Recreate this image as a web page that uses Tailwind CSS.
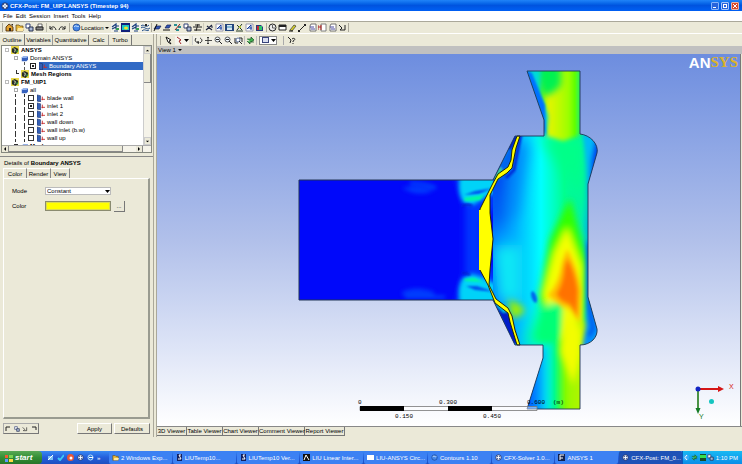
<!DOCTYPE html>
<html lang="en">
<head>
<meta charset="utf-8">
<title>CFX-Post</title>
<script src="https://cdn.jsdelivr.net/npm/@tailwindcss/browser@4"></script>
</head>
<body class="flex h-screen flex-col overflow-hidden bg-[#ebe9d8] font-['Liberation_Sans',sans-serif] text-[6px] leading-[8px] text-black">
<svg class="hidden" aria-hidden="true">
  <symbol id="folder" viewBox="0 0 9 9"><path d="M1 2h3l1 1h3v5H1z" fill="#e8b93c" stroke="#5c4210" stroke-width=".7"/><path d="M2 8l1-3h6L8 8z" fill="#ffe9a0"/></symbol>
  <symbol id="home" viewBox="0 0 9 9"><path d="M1 4l3-3 4 3v4H1z" fill="#e0a030" stroke="#402000" stroke-width=".8"/><path d="M4 5h2v3H4zM6 1h2v2" fill="#30251c"/></symbol>
  <symbol id="copy" viewBox="0 0 9 9"><path d="M1 1h4v4H1z" fill="#fff" stroke="#35457a"/><path d="M4 4h4v4H4z" fill="#a8b8d8" stroke="#26304e"/></symbol>
  <symbol id="print" viewBox="0 0 9 9"><path d="M3 1h4v3H3z" fill="#fff" stroke="#333" stroke-width=".7"/><path d="M1 4h7v3H1z" fill="#888" stroke="#222"/></symbol>
  <symbol id="undo" viewBox="0 0 9 9"><path d="M2 3v3h3M2 6c2-3 5-3 6 1" fill="none" stroke="#222"/></symbol>
  <symbol id="redo" viewBox="0 0 9 9"><path d="M7 3v3H4M7 6C5 3 2 3 1 7" fill="none" stroke="#222"/></symbol>
  <symbol id="globe" viewBox="0 0 9 9"><circle cx="4.5" cy="4.5" r="3.5" fill="#4788e8" stroke="#123a82" stroke-width=".7"/><path d="M2 4c2-3 3 1 5-1" stroke="#d8ecff" fill="none"/></symbol>
  <symbol id="vector" viewBox="0 0 9 9"><path d="M1 4l4-3v2h3M1 6l4-2v2h3M3 8h4" fill="none" stroke="#163c7c" stroke-width="1.2"/><path d="M5 5h3v2H5z" fill="#37a052"/></symbol>
  <symbol id="contour" viewBox="0 0 9 9"><path d="M0 0h9v9H0z" fill="#10207a"/><path d="M1 2h7v5H1z" fill="#1ec7c4"/><ellipse cx="5" cy="5" rx="2" ry="1.5" fill="#f2e52a"/></symbol>
  <symbol id="stream" viewBox="0 0 9 9"><path d="M0 3c3-3 4 3 8-1M0 5c3-3 5 3 9 0M1 8c3-3 4 1 7-1" fill="none" stroke="#204d87"/><path d="M4 1h2v2H4z" fill="#222"/></symbol>
  <symbol id="plane" viewBox="0 0 9 9"><path d="M1 6l2-3h5L6 6z" fill="#3458b8" stroke="#111e52" stroke-width=".7"/><path d="M1 8l3-7" stroke="#111"/></symbol>
  <symbol id="plane2" viewBox="0 0 9 9"><path d="M2 5l2-3h4L6 5z" fill="#3458b8" stroke="#111e52" stroke-width=".7"/><path d="M0 7h7" stroke="#111"/></symbol>
  <symbol id="probe" viewBox="0 0 9 9"><path d="M1 1h3v2H1zM5 3h3v2H5zM3 6h3v2H3z" fill="#278d91"/><path d="M7 1L2 7" stroke="#8e2020"/></symbol>
  <symbol id="frame" viewBox="0 0 9 9"><path d="M0 4h9M1 7h7M5 1L3 8M2 2h5" fill="none" stroke="#222"/></symbol>
  <symbol id="cross" viewBox="0 0 9 9"><path d="M1 7l6-5M2 3l5 4M6 4h2" fill="none" stroke="#1d2440" stroke-width="1.2"/></symbol>
  <symbol id="text" viewBox="0 0 9 9"><path d="M1 1h7v7H1z" fill="#fff" stroke="#99a"/><path d="M2 6l4-4v5M3 5h4" fill="none" stroke="#163e9d"/></symbol>
  <symbol id="legend" viewBox="0 0 9 9"><path d="M0 1h9v7H0z" fill="#24457c"/><path d="M2 2h5v5H2z" fill="#d5e6f2"/><path d="M2 4h5" stroke="#398bb6"/></symbol>
  <symbol id="axes" viewBox="0 0 9 9"><path d="M1 8h7M2 2l5 5M7 1L2 7" fill="none" stroke="#253b25"/><path d="M4 3h2v2H4z" fill="#b6ca37"/></symbol>
  <symbol id="color" viewBox="0 0 9 9"><path d="M1 2h5l2 2v4H1z" fill="#28397b"/><path d="M2 3h2v4H2z" fill="#c32a36"/><path d="M4 3h3v4H4z" fill="#2ac56d"/></symbol>
  <symbol id="clock" viewBox="0 0 9 9"><circle cx="4.5" cy="4.5" r="3.5" fill="#eee" stroke="#222"/><path d="M4.500 2v3H7" fill="none" stroke="#222" stroke-width=".7"/></symbol>
  <symbol id="film" viewBox="0 0 9 9"><path d="M1 2h7v5H1z" fill="#fff" stroke="#222"/><path d="M1 2h7v2H1z" fill="#222"/></symbol>
  <symbol id="pencil" viewBox="0 0 9 9"><path d="M2 7l4-5 2 1-4 5z" fill="#d7d12b" stroke="#333" stroke-width=".7"/><path d="M1 8h4" stroke="#111"/></symbol>
  <symbol id="line" viewBox="0 0 9 9"><path d="M1 8l6-6" stroke="#222"/><path d="M6 1h2v2H6zM0 7h2v2H0z" fill="#222"/></symbol>
  <symbol id="page" viewBox="0 0 9 9"><path d="M3 1h5v7H2V3z" fill="#fff" stroke="#555" stroke-width=".8"/><path d="M2 4h4M3 6h4" stroke="#4b4aa0"/></symbol>
  <symbol id="pageRed" viewBox="0 0 9 9"><path d="M3 1h5v7H3z" fill="#fff" stroke="#666" stroke-width=".8"/><path d="M0 2v5M3 2v5M0 4h3" stroke="#b02525"/></symbol>
  <symbol id="sum" viewBox="0 0 9 9"><path d="M1 2l3 3-2 2h5V2" fill="none" stroke="#222"/></symbol>
  <symbol id="cursor" viewBox="0 0 9 9"><path d="M2 1l5 3-2 1 2 3-3-2z" fill="#fff" stroke="#111"/></symbol>
  <symbol id="cursorRed" viewBox="0 0 9 9"><path d="M2 1l4 3-2 1 2 3" fill="#fff" stroke="#a02323"/></symbol>
  <symbol id="rotate" viewBox="0 0 9 9"><path d="M2 2c-2 3 0 5 3 4M6 7c3-2 2-4 0-5M3 6l2 0-1 2" fill="none" stroke="#222"/></symbol>
  <symbol id="pan" viewBox="0 0 9 9"><path d="M4 1v7M1 4.500h7M3 2l1-1 1 1M3 7l1 1 1-1" fill="none" stroke="#222" stroke-width=".8"/></symbol>
  <symbol id="zoom" viewBox="0 0 9 9"><circle cx="3.500" cy="3.500" r="2.500" fill="#eef6ff" stroke="#333" stroke-width=".8"/><path d="M5 5l3 3M2 3.500h3" stroke="#222"/></symbol>
  <symbol id="zoomBox" viewBox="0 0 9 9"><path d="M1 2v5h3M5 2h3v4" fill="none" stroke="#222"/><circle cx="4" cy="4" r="2" fill="#fff" stroke="#37528b" stroke-width=".8"/><path d="M5 5l3 3" stroke="#222"/></symbol>
  <symbol id="refresh" viewBox="0 0 9 9"><path d="M1 3h4V1l3 3-3 2M8 6H4v2L1 5" fill="#3fb34f" stroke="#164f20" stroke-width=".7"/></symbol>
  <symbol id="help" viewBox="0 0 9 9"><path d="M1 1l3 3-1 3M5 3c3-2 4 1 1 2v1M6 7v1" fill="none" stroke="#222"/></symbol>
  <symbol id="case" viewBox="0 0 9 9"><path d="M0 0h9v9H0z" fill="#e9d94a"/><path d="M1 3l3-2 4 2v3L5 9 1 7z" fill="#292c24"/><path d="M3 3l2 1-1 3" fill="none" stroke="#d7e9d0"/><path d="M6 5h2v2H6z" fill="#3a9b42"/></symbol>
  <symbol id="domain" viewBox="0 0 9 9"><path d="M1 3l2-1h6v4L7 8H1z" fill="#3762be"/><path d="M1 3l2-1h6L7 4H1z" fill="#8fb2f1"/></symbol>
  <symbol id="boundary" viewBox="0 0 9 9"><path d="M0 1l4 1v7L0 8z" fill="#345fb5" stroke="#122b65" stroke-width=".6"/><path d="M9 6H5M6 3v4" stroke="#c52e31"/></symbol>
  <symbol id="gear" viewBox="0 0 9 9"><circle cx="4.500" cy="4.500" r="3.500" fill="#e7eef8" stroke="#17265c"/><path d="M2 2l5 5M7 2L2 7" stroke="#27418b"/><circle cx="4.500" cy="4.500" r="1" fill="#fff"/></symbol>
</svg>

<header>
  <div class="flex h-[11px] items-center bg-linear-to-b from-[#2084f8] via-[#0053df] to-[#0060f4] pl-px pr-[3px] text-white">
    <svg class="size-[8px]"><use href="#gear"/></svg>
    <h1 class="ml-px flex-1 font-bold">CFX-Post: FM_UIP1.ANSYS (Timestep 94)</h1>
    <div class="flex gap-[2px]">
      <button aria-label="Minimize" class="flex size-[8px] items-end rounded-[1px] border border-[#85b2fb] bg-[#2864dc] p-px"><span class="h-px w-[3px] bg-white"></span></button>
      <button aria-label="Restore" class="size-[8px] rounded-[1px] border border-[#a5c5fb] bg-[#2864dc] p-px"><span class="block size-[4px] border border-white"></span></button>
      <button aria-label="Close" class="size-[8px] rounded-[1px] border border-[#e8b4a8] bg-[#d94829]"><svg viewBox="0 0 6 6"><path d="M1 1l4 4M5 1L1 5" stroke="#fff"/></svg></button>
    </div>
  </div>
  <nav class="flex h-[11px] items-center gap-[3px] border-b border-[#aaa89a] bg-white pl-[3px]">
    <button>File</button><button>Edit</button><button>Session</button><button>Insert</button><button>Tools</button><button>Help</button>
  </nav>
  <div class="flex h-[12px] items-center border-b border-white pl-[2px]">
    <div class="flex items-center gap-px border-l border-[#aaa89a] pl-[2px]">
      <button aria-label="Load results"><svg class="size-[9px]"><use href="#home"/></svg></button>
      <button aria-label="Open state"><svg class="size-[9px]"><use href="#folder"/></svg></button>
      <button aria-label="Save state"><svg class="size-[9px]"><use href="#copy"/></svg></button>
      <button aria-label="Print"><svg class="size-[9px]"><use href="#print"/></svg></button>
    </div>
    <div class="ml-[2px] flex gap-px border-l border-[#bbb9aa] pl-px">
      <button aria-label="Undo"><svg class="size-[9px]"><use href="#undo"/></svg></button>
      <button aria-label="Redo"><svg class="size-[9px]"><use href="#redo"/></svg></button>
    </div>
    <button class="ml-[2px] flex items-center border-l border-[#aaa89a] pl-[2px]"><svg class="size-[9px]"><use href="#globe"/></svg><span>Location</span><svg class="ml-px size-[4px]" viewBox="0 0 4 4"><path d="M0 1h4L2 3z"/></svg></button>
    <div class="ml-[2px] flex gap-px bg-[#f3f2e8]">
      <button aria-label="Vector"><svg class="size-[9px]"><use href="#vector"/></svg></button>
      <button aria-label="Contour"><svg class="size-[9px]"><use href="#contour"/></svg></button>
      <button aria-label="Streamline"><svg class="size-[9px]"><use href="#vector"/></svg></button>
      <button aria-label="Particle track"><svg class="size-[9px]"><use href="#stream"/></svg></button>
    </div>
    <div class="ml-px flex gap-px border-l border-[#aaa89a] pl-px">
      <button aria-label="Slice plane"><svg class="size-[9px]"><use href="#plane"/></svg></button>
      <button aria-label="Clip plane"><svg class="size-[9px]"><use href="#plane2"/></svg></button>
      <button aria-label="Probe"><svg class="size-[9px]"><use href="#probe"/></svg></button>
      <button aria-label="Instance transform"><svg class="size-[9px]"><use href="#copy"/></svg></button>
      <button aria-label="Coordinate frame"><svg class="size-[9px]"><use href="#frame"/></svg></button>
    </div>
    <div class="ml-px flex gap-px border-l border-[#cecbbb] pl-px">
      <button aria-label="Text"><svg class="size-[9px]"><use href="#cross"/></svg></button>
      <button aria-label="Annotation"><svg class="size-[9px]"><use href="#text"/></svg></button>
      <button aria-label="Legend"><svg class="size-[9px]"><use href="#legend"/></svg></button>
      <button aria-label="Axes"><svg class="size-[9px]"><use href="#axes"/></svg></button>
      <button aria-label="Text box"><svg class="size-[9px]"><use href="#text"/></svg></button>
      <button aria-label="Color map"><svg class="size-[9px]"><use href="#color"/></svg></button>
    </div>
    <div class="ml-[2px] flex gap-px border-x border-[#aaa89a] px-px">
      <button aria-label="Timestep selector"><svg class="size-[9px]"><use href="#clock"/></svg></button>
      <button aria-label="Animation"><svg class="size-[9px]"><use href="#film"/></svg></button>
      <button aria-label="Quick editor"><svg class="size-[9px]"><use href="#pencil"/></svg></button>
      <button aria-label="Line"><svg class="size-[9px]"><use href="#line"/></svg></button>
      <button aria-label="Table"><svg class="size-[9px]"><use href="#page"/></svg></button>
      <button aria-label="Chart"><svg class="size-[9px]"><use href="#pageRed"/></svg></button>
      <button aria-label="Report"><svg class="size-[9px]"><use href="#page"/></svg></button>
      <button aria-label="Function calculator"><svg class="size-[9px]"><use href="#sum"/></svg></button>
    </div>
  </div>
</header>

<div class="flex min-h-0 flex-1">
  <aside class="flex w-[154px] shrink-0 flex-col border-r border-[#aaa89a]">
    <div role="tablist" class="flex h-[11px] shrink-0 items-end whitespace-nowrap text-center">
      <button role="tab" class="h-[11px] w-[25px] border-r border-[#777]">Outline</button>
      <button role="tab" class="h-[10px] w-[28px] border-r border-[#999]">Variables</button>
      <button role="tab" class="h-[10px] w-[36px] border-r border-[#777]">Quantitative</button>
      <button role="tab" class="h-[10px] w-[20px] border-r border-[#999]">Calc</button>
      <button role="tab" class="h-[10px] w-[23px] border-r border-[#777]">Turbo</button>
    </div>
    <div class="mx-px flex h-[108px] shrink-0 flex-col border border-[#85887f] bg-white">
      <div class="flex min-h-0 flex-1">
        <ul class="min-w-0 flex-1 overflow-hidden whitespace-nowrap *:flex *:h-[8px] *:items-center *:gap-[2px]">
          <li class="pl-[3px] font-bold"><span class="size-[4px] border border-[#bbb]"></span><svg class="size-[8px]"><use href="#case"/></svg>ANSYS</li>
          <li class="pl-[12px]"><span class="size-[4px] border border-[#aaa]"></span><svg class="ml-px size-[7px]"><use href="#domain"/></svg>Domain ANSYS</li>
          <li class="pl-[22px]"><span class="h-full border-l border-dashed border-[#555]"></span><input type="checkbox" checked aria-label="Boundary ANSYS" class="ml-[3px] size-[6px] appearance-none border border-[#222] bg-[radial-gradient(#222_30%,white_35%)]"><span class="ml-px flex h-full flex-1 items-center gap-[2px] bg-[#316ac5] text-white"><svg class="size-[8px]"><use href="#boundary"/></svg>Boundary ANSYS</span></li>
          <li class="pl-[14px] font-bold"><span class="-mt-[4px] h-[4px] w-[3px] border-b border-l border-[#333]"></span><svg class="size-[8px]"><use href="#case"/></svg>Mesh Regions</li>
          <li class="pl-[3px] font-bold"><span class="size-[4px] border border-[#bbb]"></span><svg class="size-[8px]"><use href="#case"/></svg>FM_UIP1</li>
          <li class="pl-[12px]"><span class="size-[4px] border border-[#aaa]"></span><svg class="ml-px size-[7px]"><use href="#domain"/></svg>all</li>
          <li class="pl-[13px]"><span class="h-full border-l border-dashed border-[#333]"></span><span class="ml-[6px] h-full border-l border-dashed border-[#333]"></span><input id="b1" type="checkbox" class="ml-px size-[6px] appearance-none border border-[#333]"><svg class="ml-px size-[8px]"><use href="#boundary"/></svg><label for="b1">blade wall</label></li>
          <li class="pl-[13px]"><span class="h-full border-l border-dashed border-[#333]"></span><span class="ml-[6px] h-full border-l border-dashed border-[#333]"></span><input id="b2" type="checkbox" checked class="ml-px size-[6px] appearance-none border border-[#333] bg-[radial-gradient(#222_30%,white_35%)]"><svg class="ml-px size-[8px]"><use href="#boundary"/></svg><label for="b2">inlet 1</label></li>
          <li class="pl-[13px]"><span class="h-full border-l border-dashed border-[#333]"></span><span class="ml-[6px] h-full border-l border-dashed border-[#333]"></span><input id="b3" type="checkbox" class="ml-px size-[6px] appearance-none border border-[#333]"><svg class="ml-px size-[8px]"><use href="#boundary"/></svg><label for="b3">inlet 2</label></li>
          <li class="pl-[13px]"><span class="h-full border-l border-dashed border-[#333]"></span><span class="ml-[6px] h-full border-l border-dashed border-[#333]"></span><input id="b4" type="checkbox" class="ml-px size-[6px] appearance-none border border-[#333]"><svg class="ml-px size-[8px]"><use href="#boundary"/></svg><label for="b4">wall down</label></li>
          <li class="pl-[13px]"><span class="h-full border-l border-dashed border-[#333]"></span><span class="ml-[6px] h-full border-l border-dashed border-[#333]"></span><input id="b5" type="checkbox" class="ml-px size-[6px] appearance-none border border-[#333]"><svg class="ml-px size-[8px]"><use href="#boundary"/></svg><label for="b5">wall inlet (b.w)</label></li>
          <li class="pl-[13px]"><span class="h-full border-l border-dashed border-[#333]"></span><span class="ml-[6px] h-full border-l border-dashed border-[#333]"></span><input id="b6" type="checkbox" class="ml-px size-[6px] appearance-none border border-[#333]"><svg class="ml-px size-[8px]"><use href="#boundary"/></svg><label for="b6">wall up</label></li>
          <li class="pl-[12px] font-bold"><span class="size-[4px] border border-[#333]"></span><svg class="ml-px size-[7px]"><use href="#domain"/></svg>Mesh</li>
        </ul>
        <div class="flex w-[8px] shrink-0 flex-col border-l border-[#ccc] bg-[#ecebe0]">
          <button aria-label="Scroll up" class="h-[8px] border border-[#ccc] bg-[#ebe9d8]"><svg viewBox="0 0 6 6"><path d="M1 4h4L3 2z"/></svg></button>
          <span class="h-[29px] border-b border-r border-[#888] bg-[#ebe9d8]"></span><span class="flex-1 bg-[#f5f3e9]"></span>
          <button aria-label="Scroll down" class="h-[8px] border border-[#ccc] bg-[#ebe9d8]"><svg viewBox="0 0 6 6"><path d="M1 2h4L3 4z"/></svg></button>
        </div>
      </div>
      <div class="flex h-[7px] shrink-0 border-t border-[#aaa] bg-[#f5f3e9] pr-[8px]">
        <button aria-label="Scroll left" class="w-[7px] border-r border-[#888] bg-[#ebe9d8]"><svg class="size-[6px]" viewBox="0 0 6 6"><path d="M4 1v4L2 3z"/></svg></button>
        <span class="w-[114px] border-b border-r border-[#888] bg-[#ebe9d8]"></span><span class="flex-1"></span>
        <button aria-label="Scroll right" class="w-[7px] border-r border-[#888] bg-[#ebe9d8]"><svg class="size-[6px]" viewBox="0 0 6 6"><path d="M2 1v4l2-2z"/></svg></button>
      </div>
    </div>
    <div class="mt-[3px] flex min-h-0 flex-1 flex-col border-t border-[#888]">
      <h2 class="flex h-[11px] items-center pl-[4px]"><span>Details of <b>Boundary ANSYS</b></span></h2>
      <div role="tablist" class="flex h-[10px] pl-[3px]">
        <button role="tab" class="w-[24px] border-l border-t border-white border-r border-r-[#888]">Color</button>
        <button role="tab" class="w-[24px] border-r border-t border-t-white border-r-[#888]">Render</button>
        <button role="tab" class="w-[19px] border-r border-t border-t-white border-r-[#888]">View</button>
      </div>
      <form class="mx-[3px] min-h-0 flex-1 border-b-2 border-l border-r-2 border-t border-b-[#999b90] border-l-white border-r-[#999b90] border-t-white pl-[8px] pt-[8px]">
        <div class="flex h-[8px] items-center"><label for="mode" class="w-[33px]">Mode</label><div class="relative w-[66px]"><select id="mode" class="block h-[8px] w-full appearance-none border border-[#bbb] bg-white pl-px text-[6px] leading-[6px]"><option>Constant</option></select><svg class="pointer-events-none absolute right-px top-[2px] size-[5px]" viewBox="0 0 5 5"><path d="M0 1h5L2.500 4z"/></svg></div></div>
        <div class="mt-[6px] flex h-[10px] items-center"><label for="color" class="w-[33px]">Color</label><input id="color" readonly class="h-[10px] w-[66px] border border-[#8a8b70] bg-[#ff0] outline outline-1 -outline-offset-2 outline-[#dada50]"><button type="button" aria-label="Choose color" class="ml-[3px] h-[11px] w-[11px] border-b border-r border-[#777]">...</button></div>
      </form>
      <div class="flex h-[18px] shrink-0 items-center px-[3px] pt-px">
        <div class="flex h-[11px] w-[36px] items-center justify-around border-b border-r border-[#777] border-l border-t border-l-[#aaa] border-t-[#aaa]">
          <button type="button" aria-label="New"><svg class="size-[6px]" viewBox="0 0 6 6"><path d="M5 1H1v4" fill="none" stroke="#222"/></svg></button>
          <button type="button" aria-label="Edit"><svg class="size-[6px]"><use href="#copy"/></svg></button>
          <button type="button" aria-label="Duplicate"><svg class="size-[6px]"><use href="#sum"/></svg></button>
          <button type="button" aria-label="Delete"><svg class="size-[6px]" viewBox="0 0 6 6"><path d="M1 1h4v3" fill="none" stroke="#222"/></svg></button>
        </div>
        <button class="ml-auto h-[11px] w-[35px] border-b border-r border-[#777] border-l border-t border-l-white border-t-white">Apply</button>
        <button class="ml-[2px] h-[11px] w-[36px] border-b border-r border-[#777] border-l border-t border-l-white border-t-white">Defaults</button>
      </div>
    </div>
  </aside>

  <main class="ml-[2px] flex min-w-0 flex-1 flex-col border-l border-[#aaa89a]">
    <div class="flex h-[12px] shrink-0 items-center pl-[3px]">
      <div class="flex gap-[2px] border-l border-[#aaa89a] pl-[3px]">
        <button aria-label="Select"><svg class="size-[9px]"><use href="#cursor"/></svg></button>
        <button aria-label="Pick mode" class="flex items-center bg-[#f5f4ec]"><svg class="size-[9px]"><use href="#cursorRed"/></svg><svg class="size-[5px]" viewBox="0 0 5 5"><path d="M0 1h5L2.500 4z"/></svg></button>
      </div>
      <div class="ml-[3px] flex gap-px border-l border-[#ccc] bg-[#f1f0e6] pl-px">
        <button aria-label="Rotate"><svg class="size-[9px]"><use href="#rotate"/></svg></button>
        <button aria-label="Pan"><svg class="size-[9px]"><use href="#pan"/></svg></button>
        <button aria-label="Zoom"><svg class="size-[9px]"><use href="#zoom"/></svg></button>
        <button aria-label="Zoom box"><svg class="size-[9px]"><use href="#zoom"/></svg></button>
        <button aria-label="Fit view"><svg class="size-[9px]"><use href="#zoomBox"/></svg></button>
      </div>
      <button aria-label="Highlighting" class="ml-px border-x border-[#bbb] px-px"><svg class="size-[9px]"><use href="#refresh"/></svg></button>
      <button aria-label="Viewports" class="ml-[2px] flex h-[9px] w-[18px] items-center justify-between border border-[#888] bg-white pl-[2px]"><span class="h-[6px] w-[7px] border border-[#37437c] bg-[#d9def0]"></span><svg class="size-[5px]" viewBox="0 0 5 5"><path d="M0 1h5L2.500 4z"/></svg></button>
      <button aria-label="Help" class="ml-[6px] border-l border-[#aaa] pl-[3px]"><svg class="size-[9px]"><use href="#help"/></svg></button>
    </div>
    <button class="flex h-[8px] shrink-0 items-center gap-[2px] bg-[#c0c0c0] pl-px">View 1<svg class="size-[4px]" viewBox="0 0 4 4"><path d="M0 1h4L2 3z"/></svg></button>
    <section aria-label="3D Viewer" class="relative mr-px min-h-0 flex-1 border-r border-[#777] bg-linear-to-b from-[#6d8ddf] via-[#b1c0ea] to-white">
      <svg class="size-full" viewBox="157 54 583 372" preserveAspectRatio="none" role="img" aria-label="Velocity contour on a chamber section">
        <defs>
          <clipPath id="duct"><path d="M299 180H493V300H299z"/></clipPath>
          <clipPath id="body"><path d="M527 71H580V134C590 135 599 144 597 153L588 184V297L597 329C598 337 591 345 580 345V409H527L543 358V345H515L493 300V180L515 136H544V120z"/></clipPath>
          <linearGradient id="base" gradientUnits="userSpaceOnUse" x1="490" y1="0" x2="592" y2="0"><stop stop-color="#07f"/><stop offset=".25" stop-color="#00b2ff"/><stop offset=".5" stop-color="#0ff"/><stop offset=".73" stop-color="#00ff91"/><stop offset=".9" stop-color="#00e8bf"/><stop offset="1" stop-color="#008aff"/></linearGradient>
          <linearGradient id="upper" gradientUnits="userSpaceOnUse" x1="540" y1="0" x2="581" y2="0"><stop stop-color="#4df500"/><stop offset=".2" stop-color="#e6f500"/><stop offset=".7" stop-color="#9cff00"/><stop offset=".93" stop-color="#3cff00"/><stop offset="1" stop-color="#00db8a"/></linearGradient>
          <linearGradient id="lower" gradientUnits="userSpaceOnUse" x1="527" y1="0" x2="580" y2="0"><stop stop-color="#0757ff"/><stop offset=".22" stop-color="#0091ff"/><stop offset=".37" stop-color="#00e6f8"/><stop offset=".54" stop-color="#0f7"/><stop offset=".63" stop-color="#0f0"/><stop offset=".72" stop-color="#94fa00"/><stop offset="1" stop-color="#aff500"/></linearGradient>
          <filter id="s1" x="-50%" y="-50%" width="200%" height="200%"><feGaussianBlur stdDeviation="1.300"/></filter>
          <filter id="s2" x="-50%" y="-50%" width="200%" height="200%"><feGaussianBlur stdDeviation="2.300"/></filter>
          <filter id="s3" x="-50%" y="-50%" width="200%" height="200%"><feGaussianBlur stdDeviation="3.500"/></filter>
          <filter id="s7" x="-60%" y="-60%" width="220%" height="220%"><feGaussianBlur stdDeviation="7"/></filter>
        </defs>
        <g clip-path="url(#duct)">
          <path d="M299 180H493V300H299z" fill="#0008fa"/>
          <path d="M455 174H500V204L482 222V258L500 278V306H455L465 271V207z" fill="#0035ff" filter="url(#s3)"/>
          <path d="M461 172H500V190L484 198 473 205 463 202Q456 190 461 172zM461 308H500V286L482 277 472 274 462 279Q456 291 461 308z" fill="#00d3f8" filter="url(#s2)"/>
          <g filter="url(#s1)"><path d="M464 198l20-3-4 5-15 1zM463 279l11-1 9 4-17-1z" fill="#00fc9c"/><path d="M464 195l11-4 18-3-14 6zM466 286l11 0 18 6-20-2z" fill="#0055ef"/><path d="M462 206q7-3 10 0M462 273q5 0 8 2" fill="none" stroke="#001bcf" stroke-width="2"/></g>
          <g filter="url(#s2)" opacity=".8"><path d="M402 188q14-4 32 2-14 8-32-2M402 292q14-7 32 0v3h-32" fill="#0048ff"/><path d="M410 183q15 0 26 5M405 297h40" fill="none" stroke="#0080ff" stroke-width="2"/></g>
        </g>
        <g clip-path="url(#body)">
          <path d="M490 65H603V412H490z" fill="url(#base)"/>
          <g filter="url(#s7)"><path d="M492 158L511 168 508 220 492 228z" fill="#0028ef"/><path d="M510 142h19l-12 70-18 22z" fill="#0087fa"/><path d="M538 135L588 135 584 260 543 299 525 345H590V245L566 175z" fill="#0f8"/><path d="M493 245h29v56h-23z" fill="#0be8f5"/></g>
          <g filter="url(#s3)">
            <path d="M570 198L588 262 584 345 550 346 539 296 550 239z" fill="#32ff00"/>
            <path d="M567 227L582 267 581 345H562L549 320 543 293 554 253z" fill="#f5ff00"/>
            <path d="M508 300Q521 302 525 311 518 319 511 318z" fill="#9cf000"/>
            <path d="M536 340L544 306 564 300V350z" fill="#00ff76"/>
          </g>
          <g filter="url(#s2)"><path d="M567 249Q577 266 581 290L580 329 569 311Q557 304 548 295 559 284 562 262z" fill="#ffc000"/><path d="M567 258Q575 270 578 290L577 318 569 306Q560 301 556 294 563 284 564 268z" fill="#ff7200"/></g>
          <path d="M525 60H585V134L563 141 544 135V115z" fill="url(#upper)" filter="url(#s2)"/>
          <path d="M533 65h28v20q-8 10-18 11z" fill="#00f151" filter="url(#s3)"/>
          <path d="M525 66l16 2-1 26 8 22-2 22-6-2z" fill="#00d9d8" filter="url(#s2)"/><path d="M525 69l7 4 13 32 1 31-6-13z" fill="#0071ff" filter="url(#s1)"/>
          <path d="M515 360L543 347 564 338 572 322H595V425H515z" fill="url(#lower)" filter="url(#s3)"/>
          <path d="M560 352L566 302 582 330V350q-4 20-9 35z" fill="#f3fd00" filter="url(#s3)"/>
          <g filter="url(#s2)"><path d="M583 134L604 134 605 157 589 198 587 168z" fill="#00baf6"/><path d="M595 139L605 145 590 198 591 160z" fill="#004aef"/><path d="M586 240L592 240V296L602 328 592 348 582 350 586 325z" fill="#008fff"/><path d="M589 244V306L593 328 589 336" fill="none" stroke="#0037e2" stroke-width="3"/></g>
          <g filter="url(#s1)"><path d="M494 180L515 136H520L513 162 503 171z" fill="#0065ed"/><path d="M516 136l-7 13" stroke="#0018c8" stroke-width="4"/><path d="M521 134l-4 20-3 16-8 8" fill="none" stroke="#0028d8" stroke-width="3"/><path d="M501 168l-6 11 6-4" fill="none" stroke="#42e27c" stroke-width="3"/><path d="M493 300L512 344H518L510 315z" fill="#001cc9"/><path d="M497 304l8 8" stroke="#00c8e8" stroke-width="3"/><ellipse cx="534" cy="297" rx="2.500" ry="6" fill="#0066ed" transform="rotate(-18 534 297)"/></g>
        </g>
        <path d="M517 136h3L516 148 514 158 512 168 507 173 498 179 490 195V213L493 239 490 270 489 285 496 299 508 308 512 316 515 330 520 345H517L510 322 508 313 495 303 488 285 480 270V209L493 183 498 174 508 167 511 160 512 150z" fill="#ff0" stroke="#171700" stroke-width=".9"/>
        <path d="M480 210V270" stroke="#ff0" stroke-width="2"/>
        <g fill="none" stroke="#203456"><path d="M493 180H299V300H493"/><path d="M493 180L515 136H544V120L527 71H580V134C590 135 599 144 597 153L588 184V297L597 329C598 337 591 345 580 345V409H527L543 358V345H515L493 300" stroke-width=".9"/></g>
        <path d="M360 406.500H537V410.500H360z" fill="#fff" fill-opacity=".45" stroke="#777" stroke-width=".8"/><path d="M360 406h44v5h-44zM448 406h44v5h-44z"/>
        <g font-family="Liberation Mono, monospace" font-size="6"><text x="358" y="404">0</text><text x="439" y="404">0.300</text><text x="527" y="404">0.600</text><text x="553" y="404">(m)</text><text x="395" y="418">0.150</text><text x="483" y="418">0.450</text></g>
        <path d="M699 389h20" stroke="#d51515" stroke-width="2"/><path d="M718 386l6 3-6 3z" fill="#d51515"/><path d="M698 390v20" stroke="#4b9345" stroke-width="2"/><path d="M695.500 408h5l-2.500 6z" fill="#157b25"/><circle cx="698" cy="389" r="2.500" fill="#1225c4"/><circle cx="711.500" cy="401.500" r="2.500" fill="#14c5c0"/>
        <g font-family="Liberation Sans, sans-serif" font-size="7"><text x="729" y="389" fill="#d51515">X</text><text x="699" y="419" fill="#157b25">Y</text></g>
      </svg>
      <div class="absolute right-[2px] top-px flex items-center text-[15px] leading-[15px]"><span class="font-bold text-white">AN</span><span class="font-['Liberation_Serif',serif] font-bold text-[#dcb32c]">SYS</span></div>
    </section>
    <div role="tablist" class="flex h-[11px] shrink-0 items-start whitespace-nowrap border-t border-[#888] *:h-[9px] *:border-b *:border-r *:border-[#777]">
      <button role="tab" class="w-[30px]">3D Viewer</button><button role="tab" class="w-[36px]">Table Viewer</button><button role="tab" class="w-[36px]">Chart Viewer</button><button role="tab" class="w-[46px]">Comment Viewer</button><button role="tab" class="w-[40px]">Report Viewer</button>
    </div>
  </main>
</div>
<div class="h-[14px] shrink-0"></div>

<footer class="flex h-[13px] shrink-0 items-center overflow-hidden whitespace-nowrap bg-linear-to-b from-[#3989f4] via-[#245edb] to-[#1d4fc0] text-white">
  <button class="flex h-full w-[42px] shrink-0 items-center gap-[2px] rounded-r-[4px] bg-linear-to-b from-[#58a955] via-[#338e35] to-[#28752a] pl-[5px] text-[8px] font-bold italic"><svg class="size-[8px]" viewBox="0 0 8 8"><path d="M0 1h3v3H0z" fill="#f15b34"/><path d="M4 1h4v3H4z" fill="#7bd454"/><path d="M0 5h3v3H0z" fill="#5c99ff"/><path d="M4 5h4v3H4z" fill="#ffdb42"/></svg>start</button>
  <div class="flex w-[67px] shrink-0 items-center gap-[3px] pl-[5px]">
    <button aria-label="Desktop"><svg class="size-[7px]" viewBox="0 0 7 7"><path d="M1 2h5v4H1z" fill="#7cc0f4"/><path d="M1 6l5-5" stroke="#fff"/></svg></button>
    <button aria-label="Messenger"><svg class="size-[7px]" viewBox="0 0 7 7"><path d="M1 4l2 2 4-5" fill="none" stroke="#3fc8f4" stroke-width="2"/></svg></button>
    <button aria-label="Browser"><svg class="size-[7px]" viewBox="0 0 7 7"><circle cx="3.500" cy="3.500" r="3.500" fill="#e95636"/><circle cx="4" cy="4" r="1.500" fill="#fff"/></svg></button>
    <button aria-label="Media"><svg class="size-[7px]"><use href="#gear"/></svg></button>
    <button aria-label="Internet"><svg class="size-[7px]" viewBox="0 0 7 7"><circle cx="3.500" cy="3.500" r="2.500" fill="#236fd8" stroke="#b8e2ff"/><path d="M2 3.500h4" stroke="#fff"/></svg></button><span>»</span>
  </div>
  <nav aria-label="Open windows" class="grid h-full min-w-0 flex-1 grid-cols-9 gap-px *:flex *:min-w-0 *:items-center *:gap-[2px] *:rounded-[2px] *:bg-[#3c81f3] *:pl-[3px]">
  <button><svg class="size-[7px] shrink-0"><use href="#folder"/></svg>2 Windows Exp...</button>
  <button><svg class="size-[7px] shrink-0" viewBox="0 0 7 7"><path d="M1 0h5v7H1z" fill="#13205f"/><path d="M5 1H3l2 4H2" stroke="#fff" fill="none"/></svg>LIUTemp10...</button>
  <button><svg class="size-[7px] shrink-0" viewBox="0 0 7 7"><path d="M1 0h5v7H1z" fill="#13205f"/><path d="M5 1H3l2 4H2" stroke="#fff" fill="none"/></svg>LIUTemp10 Ver...</button>
  <button><svg class="size-[7px] shrink-0" viewBox="0 0 7 7"><path d="M0 0h7v7H0z" fill="#111"/><path d="M1 6l2-5 3 5" stroke="#fff" fill="none"/></svg>LIU Linear Inter...</button>
  <button><svg class="size-[7px] shrink-0" viewBox="0 0 7 7"><path d="M0 1h7v5H0z" fill="#fff"/></svg>LIU-ANSYS Circ...</button>
  <button><svg class="size-[7px] shrink-0"><use href="#globe"/></svg>Contours 1.10</button>
  <button><svg class="size-[7px] shrink-0"><use href="#gear"/></svg>CFX-Solver 1.0...</button>
  <button><svg class="size-[7px] shrink-0" viewBox="0 0 7 7"><path d="M0 0h7v7H0z" fill="#10214e"/><path d="M2 6V1h4M2 4h3" stroke="#fff" fill="none"/></svg>ANSYS 1</button>
  <button class="bg-[#1e52b7]!"><svg class="size-[7px] shrink-0"><use href="#gear"/></svg>CFX-Post: FM_0...</button>
  </nav>
  <div class="flex h-full w-[60px] shrink-0 items-center gap-px border-l border-[#095bbd] bg-linear-to-b from-[#19b9f3] to-[#0d8de8]"><svg class="size-[7px]" viewBox="0 0 7 7"><circle cx="3" cy="3.500" r="3" fill="#3aabf7"/><path d="M4 1L2 3.500 4 6" fill="none" stroke="#fff"/></svg><svg class="size-[7px]"><use href="#refresh"/></svg><svg class="size-[7px]" viewBox="0 0 7 7"><path d="M1 0h6v7H1z" fill="#174c26"/><path d="M1 1h6v3H1z" fill="#35df4c"/></svg><svg class="size-[7px]"><use href="#copy"/></svg><time class="ml-auto pr-[4px]">1:10 PM</time></div>
</footer>
</body>
</html>
